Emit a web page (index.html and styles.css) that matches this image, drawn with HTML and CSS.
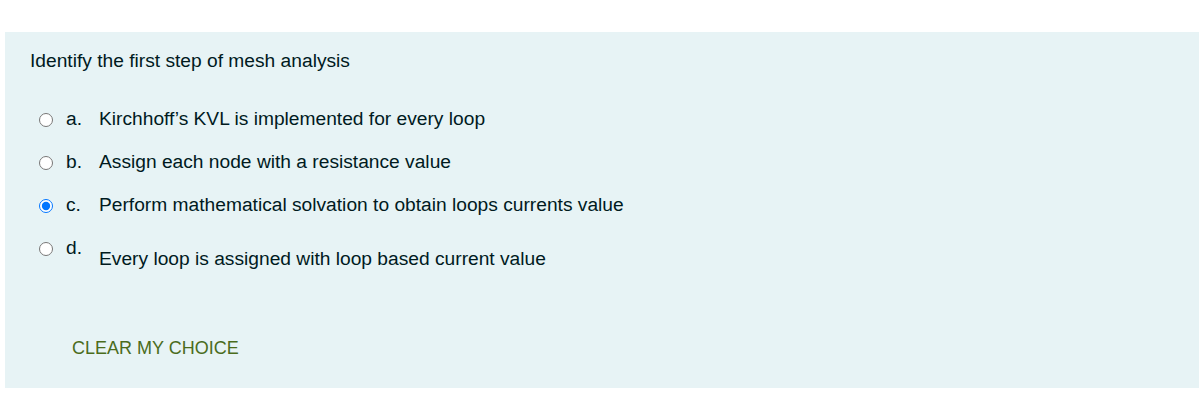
FILE: index.html
```html
<!DOCTYPE html>
<html lang="en">
<head>
    <meta charset="UTF-8">
    <meta name="viewport" content="width=device-width, initial-scale=1.0">
    <link rel="stylesheet" href="styles.css">
    <title>Question</title>
</head>
<body>

<div class="formulation">
    <div class="qtext">Identify the first step of mesh analysis</div>

    <div class="answer">
        <div class="option">
            <input type="radio" name="q1" id="q1a">
            <span class="letter">a.</span>
            <label for="q1a" class="text">Kirchhoff’s KVL is implemented for every loop</label>
        </div>
        <div class="option">
            <input type="radio" name="q1" id="q1b">
            <span class="letter">b.</span>
            <label for="q1b" class="text">Assign each node with a resistance value</label>
        </div>
        <div class="option">
            <input type="radio" name="q1" id="q1c" checked>
            <span class="letter">c.</span>
            <label for="q1c" class="text">Perform mathematical solvation to obtain loops currents value</label>
        </div>
        <div class="option">
            <input type="radio" name="q1" id="q1d">
            <span class="letter">d.</span>
            <label for="q1d" class="text text-para">Every loop is assigned with loop based current value</label>
        </div>
    </div>

    <div class="clear-choice">
        <a href="#">CLEAR MY CHOICE</a>
    </div>
</div>

</body>
</html>
```

FILE: styles.css
```css
body {
    margin: 0;
    padding: 32px 0 0 5px;
    background: #ffffff;
    font-family: "Liberation Sans", Arial, sans-serif;
    font-size: 19.2px;
    color: #001a1e;
}

.formulation {
    background: #e7f3f5;
    height: 356px;
    box-sizing: border-box;
    padding: 18px 0 0 25px;
}

.qtext {
    line-height: 22px;
    margin-bottom: 36px;
}

.answer {
    padding-left: 9px;
}

.option {
    display: flex;
    align-items: flex-start;
    line-height: 22px;
    margin-bottom: 21px;
}

.option input {
    width: 14px;
    height: 14px;
    margin: 5px 0 0 0;
}

.letter {
    width: 33px;
    padding-left: 13px;
}

.text-para {
    padding-top: 11px;
}

.clear-choice {
    padding: 47px 0 0 42px;
    font-size: 18px;
}

.clear-choice a {
    color: #4b6c1c;
    text-decoration: none;
}
```
